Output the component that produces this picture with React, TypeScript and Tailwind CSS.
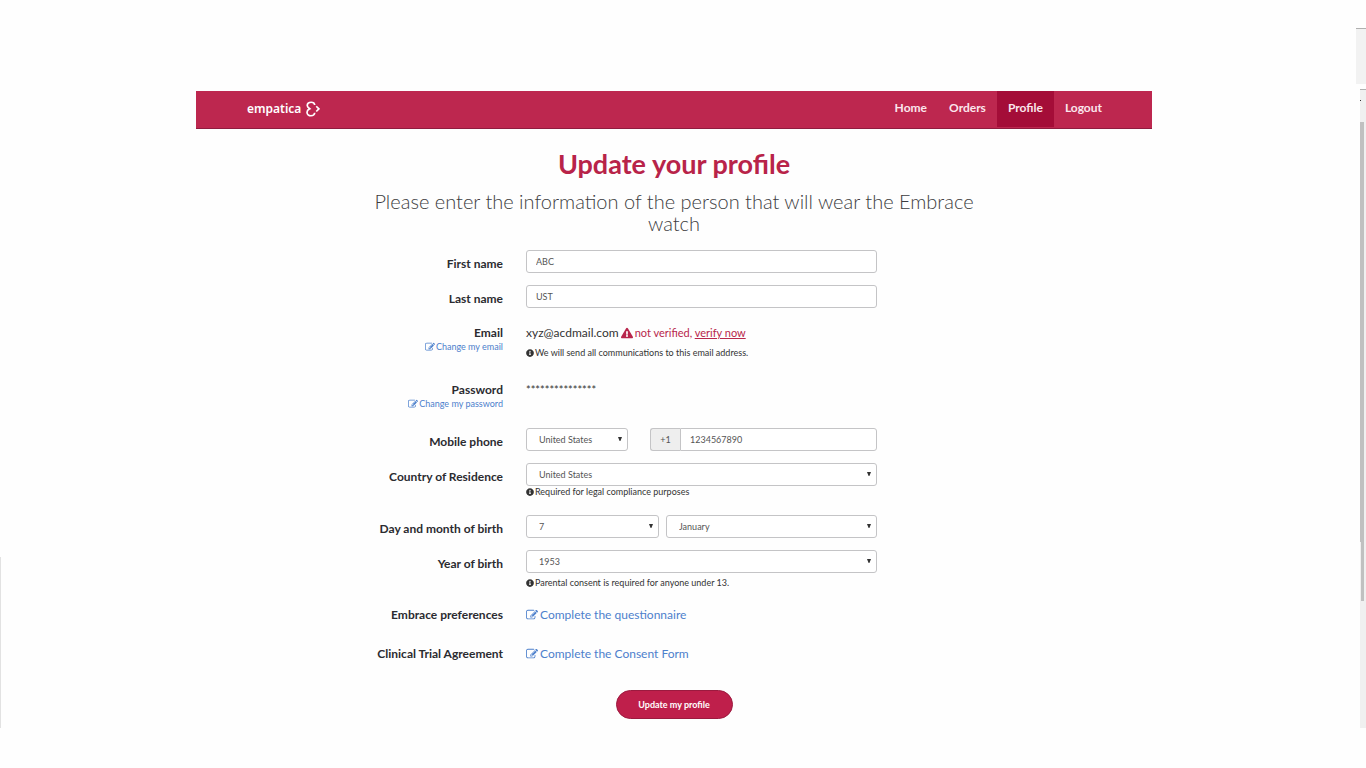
import React, { useState } from 'react';
import { FaExclamationTriangle, FaInfoCircle } from 'react-icons/fa';
import clsx from 'clsx';

const NAV_ITEMS = ['Home', 'Orders', 'Profile', 'Logout'];
const COUNTRIES = ['United States', 'Canada', 'Italy', 'United Kingdom'];
const DAYS = Array.from({ length: 31 }, (_, i) => String(i + 1));
const MONTHS = [
    'January', 'February', 'March', 'April', 'May', 'June',
    'July', 'August', 'September', 'October', 'November', 'December',
];
const YEARS = Array.from({ length: 80 }, (_, i) => String(1940 + i));

const INPUT_CLASS = 'h-[23px] w-full min-w-0 rounded-[3px] border border-[#c4c4c6] bg-white px-[9px] text-[9px] text-[#555] focus:border-[#bd274f] focus:outline-none';

const EditIcon: React.FC<{ size: number }> = ({ size }) => (
    <svg width={size} height={size} viewBox="0 0 1792 1792" fill="currentColor" aria-hidden="true">
        <path d="M888 1184l116-116-152-152-116 116v56h96v96h56zm440-720q-16-16-33 1l-350 350q-17 17-1 33t33-1l350-350q17-17 1-33zm80 594v190q0 119-84.500 203.500t-203.500 84.500h-832q-119 0-203.500-84.500t-84.500-203.500v-832q0-119 84.500-203.500t203.500-84.500h832q63 0 117 25 15 7 18 23 3 17-9 29l-49 49q-14 14-32 8-23-6-45-6h-832q-66 0-113 47t-47 113v832q0 66 47 113t113 47h832q66 0 113-47t47-113v-126q0-13 9-22l64-64q15-15 35-7t20 29zm-96-738l288 288-672 672h-288v-288zm444 132l-92 92-288-288 92-92q28-28 68-28t68 28l152 152q28 28 28 68t-28 68z" />
    </svg>
);

interface RowProps {
    label: string;
    htmlFor?: string;
    action?: string;
    className?: string;
    children: React.ReactNode;
}

const Row: React.FC<RowProps> = ({ label, htmlFor, action, className, children }) => (
    <div className={clsx('grid grid-cols-[307px_351px] gap-x-[23px]', className)}>
        <div className="pt-1.5 text-right">
            {htmlFor ? (
                <label htmlFor={htmlFor} className="block text-[12px] leading-4 font-bold text-[#2b2b30]">{label}</label>
            ) : (
                <div className="text-[12px] leading-4 font-bold text-[#2b2b30]">{label}</div>
            )}
            {action && (
                <a href="#" className="flex items-center justify-end gap-px text-[9px] leading-3 text-[#4d80cc] hover:underline">
                    <EditIcon size={10} />
                    {action}
                </a>
            )}
        </div>
        <div>{children}</div>
    </div>
);

const Note: React.FC<{ className?: string; children: React.ReactNode }> = ({ className, children }) => (
    <p className={clsx('flex items-center gap-px text-[9px] leading-3 text-[#333]', className)}>
        <FaInfoCircle size={8} />
        {children}
    </p>
);

interface SelectProps {
    id: string;
    label?: string;
    options: string[];
    initial: string;
    className?: string;
}

const Select: React.FC<SelectProps> = ({ id, label, options, initial, className }) => {
    const [value, setValue] = useState(initial);

    return (
        <div className={clsx('relative', className)}>
            <select
                id={id}
                aria-label={label}
                value={value}
                onChange={(e) => setValue(e.target.value)}
                className="block h-[23px] w-full appearance-none rounded-[3px] border border-[#c4c4c6] bg-white pr-4 pl-3 text-[9px] text-[#555] focus:outline-none"
            >
                {options.map(o => <option key={o} value={o}>{o}</option>)}
            </select>
            <svg viewBox="0 0 4 4" className="pointer-events-none absolute top-[9px] right-1.5 size-1 fill-[#333]">
                <path d="M0 0h4L2.400 4h-.8z" />
            </svg>
        </div>
    );
};

const Logo: React.FC = () => (
    <a href="#" className="flex items-center gap-[5px] pb-0.5 text-white">
        <span className="font-['Noto_Sans','Open_Sans',sans-serif] text-[12px] leading-4 font-semibold">empatica</span>
        <svg viewBox="0 0 28 32" className="h-4 w-3.5" fill="none" stroke="currentColor" strokeWidth="3.4">
            <path d="M17.500 8C17 4.500 14 2.500 10.500 2.500C6 2.500 2.500 5 2.500 9C2.500 11.500 4 13 7.500 15.500C3.500 17.500 2 19.500 2 22.500C2 26.500 5.500 29.500 10 29.500C14.500 29.500 17 27 17.500 23.500" />
            <path d="M20.500 10.500l5.200 5.200L20.500 21" />
        </svg>
    </a>
);

export default function App() {
    const [firstName, setFirstName] = useState('ABC');
    const [lastName, setLastName] = useState('UST');
    const [phone, setPhone] = useState('1234567890');

    return (
        <div className="flex min-h-screen bg-[#fefefe] font-['Lato',sans-serif]">
            {/* Left window edge */}
            <div className="w-px shrink-0 pt-[557px]">
                <div className="h-[171px] bg-[#e2e2e2]" />
            </div>

            <div className="min-w-0 flex-1 pt-[91px] pr-[9px] pb-10">
                <div className="mx-auto max-w-[956px]">
                    {/* Navigation */}
                    <header className="flex h-[38px] justify-between border-b border-[#8f1c3f] bg-[#bd274f] pr-[39px] pl-[51px]">
                        <Logo />
                        <nav className="flex h-9">
                            {NAV_ITEMS.map(item => (
                                <a
                                    key={item}
                                    href="#"
                                    className={clsx(
                                        'flex items-center px-[11px] pb-0.5 text-[12px] font-bold text-[#fbe6ec]',
                                        item === 'Profile' && 'bg-[#a40d38]'
                                    )}
                                >
                                    {item}
                                </a>
                            ))}
                        </nav>
                    </header>

                    <main>
                        <h1 className="mt-[19px] text-center text-[27px] leading-8 font-bold text-[#b82349]">Update your profile</h1>
                        <p className="mx-auto mt-2.5 max-w-[620px] text-center text-[20px] leading-[22px] font-light text-[#3c3c40]">
                            Please enter the information of the person that will wear the Embrace watch
                        </p>

                        <form className="mt-4" onSubmit={e => e.preventDefault()}>
                            <Row label="First name" htmlFor="first-name">
                                <input id="first-name" value={firstName} onChange={e => setFirstName(e.target.value)} className={clsx(INPUT_CLASS, 'block')} />
                            </Row>

                            <Row label="Last name" htmlFor="last-name" className="mt-3">
                                <input id="last-name" value={lastName} onChange={e => setLastName(e.target.value)} className={clsx(INPUT_CLASS, 'block')} />
                            </Row>

                            <Row label="Email" action="Change my email" className="mt-[11px]">
                                <div className="flex items-center pt-1.5 text-[12px] leading-4 text-[#333]">
                                    xyz@acdmail.com
                                    <span className="ml-0.5 flex items-center gap-0.5 text-[11px] text-[#b8264c]">
                                        <FaExclamationTriangle size={12} />
                                        <span>not verified, <a href="#" className="underline">verify now</a></span>
                                    </span>
                                </div>
                                <Note className="mt-1.5">We will send all communications to this email address.</Note>
                            </Row>

                            <Row label="Password" action="Change my password" className="mt-[17px]">
                                <div className="pt-1.5 text-[11px] leading-4 text-[#333]">***************</div>
                            </Row>

                            <Row label="Mobile phone" htmlFor="phone" className="mt-[18px]">
                                <div className="flex">
                                    <Select id="phone-country" label="Phone country" options={COUNTRIES} initial="United States" className="w-[102px]" />
                                    <div className="ml-[22px] flex flex-1">
                                        <span className="flex w-[30px] items-center justify-center rounded-l-[3px] border border-r-0 border-[#c4c4c6] bg-[#eee] text-[9px] text-[#555]">+1</span>
                                        <input id="phone" type="tel" value={phone} onChange={e => setPhone(e.target.value)} className={clsx(INPUT_CLASS, 'flex-1 rounded-l-none')} />
                                    </div>
                                </div>
                            </Row>

                            <Row label="Country of Residence" htmlFor="country" className="mt-3">
                                <Select id="country" options={COUNTRIES} initial="United States" />
                                <Note>Required for legal compliance purposes</Note>
                            </Row>

                            <Row label="Day and month of birth" htmlFor="day" className="mt-[17px]">
                                <div className="flex gap-[7px]">
                                    <Select id="day" options={DAYS} initial="7" className="w-[133px]" />
                                    <Select id="month" label="Month of birth" options={MONTHS} initial="January" className="flex-1" />
                                </div>
                            </Row>

                            <Row label="Year of birth" htmlFor="year" className="mt-3">
                                <Select id="year" options={YEARS} initial="1953" />
                                <Note className="mt-1">Parental consent is required for anyone under 13.</Note>
                            </Row>

                            <Row label="Embrace preferences" className="mt-3">
                                <a href="#" className="flex items-center gap-0.5 pt-1.5 text-[12px] leading-4 text-[#4d80cc] hover:underline">
                                    <EditIcon size={12} />
                                    Complete the questionnaire
                                </a>
                            </Row>

                            <Row label="Clinical Trial Agreement" className="mt-[17px]">
                                <a href="#" className="flex items-center gap-0.5 pt-1.5 text-[12px] leading-4 text-[#4d80cc] hover:underline">
                                    <EditIcon size={12} />
                                    Complete the Consent Form
                                </a>
                            </Row>

                            <button type="submit" className="mx-auto mt-7 block h-[29px] w-[117px] rounded-full border border-[#9c1a3f] bg-[#bf1f4b] text-[9px] font-bold text-white">
                                Update my profile
                            </button>
                        </form>
                    </main>
                </div>
            </div>

            {/* Right window edge with the scroll bar */}
            <div className="flex w-2.5 shrink-0 flex-col items-end pt-7">
                <div className="h-14 w-2.5 border-t border-[#b0b0b0] bg-[#f2f2f2]" />
                <div className="mt-[5px] h-[639px] w-1.5 border-t border-[#b0b0b0] bg-[#f0f0f0]">
                    <div className="mt-2.5 h-px w-px bg-[#333]" />
                    <div className="mt-[21px] h-[420px] w-1 bg-[#c0c0c0]" />
                    <div className="ml-px h-[59px] w-[3px] bg-[#c0c0c0]" />
                </div>
            </div>
        </div>
    );
}
